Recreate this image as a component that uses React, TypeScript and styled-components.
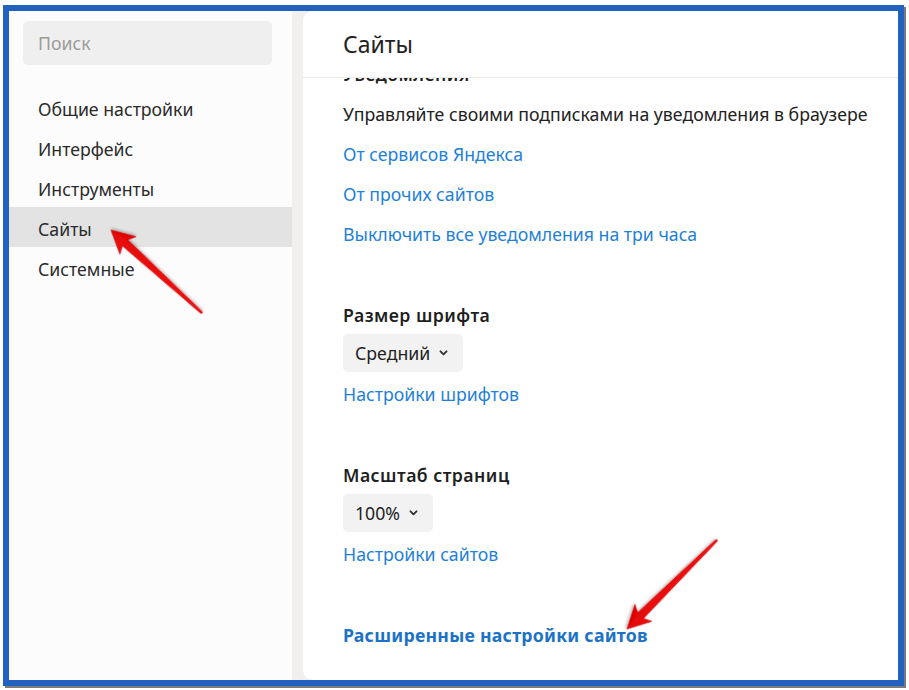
import * as React from 'react'
import styled, { createGlobalStyle } from 'styled-components'

const GlobalStyle = createGlobalStyle`
  html, body {
    margin: 0;
    padding: 0;
    background: #ffffff;
  }

  body {
    font-family: "Noto Sans", "Open Sans", "Liberation Sans", sans-serif;
    color: #222;
  }
`

const Page = styled('div')`
  position: relative;
  width: 909px;
  height: 690px;
  overflow: hidden;
`

const Frame = styled('div')`
  position: absolute;
  left: 3px;
  top: 5px;
  width: 901px;
  height: 681px;
  box-sizing: border-box;
  border: 6px solid #2162c1;
  box-shadow: 2px 2px 0 #7c7c7c;
  background: #f1f0ee;
  display: flex;
  overflow: hidden;
`

const Sidebar = styled('aside')`
  width: 283px;
  flex-shrink: 0;
  background: #fcfcfc;
  padding-top: 10px;
  display: flex;
  flex-direction: column;
`

const SearchBox = styled('div')`
  margin: 0 20px 0 14px;
  height: 44px;
  background: #efefef;
  border-radius: 5px;
  display: flex;
  align-items: center;
  padding-left: 15px;
  color: #9b9b9b;
  font-size: 17.7px;
`

const NavList = styled('nav')`
  margin-top: 22px;
  display: flex;
  flex-direction: column;
`

const NavItem = styled('div')<{ $active?: boolean }>`
  height: 40px;
  display: flex;
  align-items: center;
  padding-left: 29px;
  padding-top: 3px;
  box-sizing: border-box;
  font-size: 17.7px;
  color: #2b2b2b;
  background: ${(props) => (props.$active ? '#e3e3e3' : 'transparent')};
`

const Panel = styled('main')`
  flex: 1;
  margin-left: 11px;
  background: #ffffff;
  border-radius: 10px 0 0 10px;
  display: flex;
  flex-direction: column;
  overflow: hidden;
`

const PanelHeader = styled('header')`
  height: 66px;
  flex-shrink: 0;
  border-bottom: 1px solid #ebebeb;
  padding-left: 40px;
  display: flex;
  align-items: center;
  font-size: 23px;
  color: #222;
  position: relative;
  z-index: 1;
  background: #fff;
`

const Content = styled('div')`
  flex: 1;
  overflow: hidden;
  padding-left: 40px;
`

const Section = styled('section')<{ $pulled?: boolean }>`
  margin-top: ${(props) => (props.$pulled ? '-23px' : '0')};
  margin-bottom: 41px;
  display: flex;
  flex-direction: column;
  align-items: flex-start;
`

const Row = styled('div')`
  height: 40px;
  line-height: 41px;
  font-size: 17.7px;
  white-space: nowrap;
`

const SectionTitle = styled(Row)<{ $clipped?: boolean }>`
  font-weight: 600;
  letter-spacing: 0.45px;
  color: #1f1f1f;
  height: 39px;
  line-height: ${(props) => (props.$clipped ? '38px' : '41px')};
  overflow: hidden;
`

const LinkRow = styled(Row)<{ $strong?: boolean; $gap?: boolean }>`
  color: ${(props) => (props.$strong ? '#1b72c6' : '#1f80d8')};
  font-weight: ${(props) => (props.$strong ? 700 : 400)};
  letter-spacing: ${(props) => (props.$strong ? '0.25px' : '0')};
  margin-top: ${(props) => (props.$gap ? '2px' : '0')};
  cursor: pointer;
`

const Select = styled('div')<{ $width: number }>`
  width: ${(props) => props.$width}px;
  height: 38px;
  box-sizing: border-box;
  padding-left: 12px;
  background: #f2f2f2;
  border-radius: 5px;
  display: flex;
  align-items: center;
  gap: 9px;
  font-size: 17.7px;
  color: #222;
`

const Overlay = styled('svg')`
  position: absolute;
  left: 0;
  top: 0;
  pointer-events: none;
`

const Chevron = () => (
  <svg width="9" height="6" viewBox="0 0 9 6">
    <path d="M1.5 1.3 L4.5 4.3 L7.5 1.3" fill="none" stroke="#333" strokeWidth="1.9" strokeLinecap="round" strokeLinejoin="round" />
  </svg>
)

interface ArrowProps {
  from: [number, number]
  to: [number, number]
}

const Arrow = ({ from, to }: ArrowProps) => {
  const dx = to[0] - from[0]
  const dy = to[1] - from[1]
  const len = Math.sqrt(dx * dx + dy * dy)
  const angle = (Math.atan2(dy, dx) * 180) / Math.PI
  const points = [
    [0, -0.9],
    [len - 19, -4],
    [len - 23, -12],
    [len, 0],
    [len - 23, 12],
    [len - 19, 4],
    [0, 0.9],
  ]
    .map((p) => p.join(','))
    .join(' ')

  return (
    <g transform={`translate(${from[0]} ${from[1]}) rotate(${angle})`}>
      <polygon points={points} fill="url(#arrowRed)" stroke="#c90000" strokeWidth="0.6" strokeLinejoin="round" filter="url(#arrowShadow)" />
    </g>
  )
}

const navItems = ['Общие настройки', 'Интерфейс', 'Инструменты', 'Сайты', 'Системные']

export default function App() {
  return (
    <Page>
      <GlobalStyle />
      <Frame>
        <Sidebar>
          <SearchBox>Поиск</SearchBox>
          <NavList>
            {navItems.map((item) => (
              <NavItem key={item} $active={item === 'Сайты'}>
                {item}
              </NavItem>
            ))}
          </NavList>
        </Sidebar>
        <Panel>
          <PanelHeader>Сайты</PanelHeader>
          <Content>
            <Section $pulled>
              <SectionTitle $clipped>Уведомления</SectionTitle>
              <Row>Управляйте своими подписками на уведомления в браузере</Row>
              <LinkRow>От сервисов Яндекса</LinkRow>
              <LinkRow>От прочих сайтов</LinkRow>
              <LinkRow>Выключить все уведомления на три часа</LinkRow>
            </Section>
            <Section>
              <SectionTitle>Размер шрифта</SectionTitle>
              <Select $width={120}>
                Средний <Chevron />
              </Select>
              <LinkRow $gap>Настройки шрифтов</LinkRow>
            </Section>
            <Section>
              <SectionTitle>Масштаб страниц</SectionTitle>
              <Select $width={90}>
                100% <Chevron />
              </Select>
              <LinkRow $gap>Настройки сайтов</LinkRow>
            </Section>
            <Section>
              <LinkRow $strong>Расширенные настройки сайтов</LinkRow>
            </Section>
          </Content>
        </Panel>
      </Frame>
      <Overlay width="909" height="690" viewBox="0 0 909 690">
        <defs>
          <linearGradient id="arrowRed" x1="0" y1="0" x2="1" y2="1">
            <stop offset="0" stopColor="#ff1a1a" />
            <stop offset="1" stopColor="#d90000" />
          </linearGradient>
          <filter id="arrowShadow" x="-20%" y="-20%" width="140%" height="140%">
            <feDropShadow dx="1" dy="1.5" stdDeviation="1" floodColor="#000" floodOpacity="0.25" />
          </filter>
        </defs>
        <Arrow from={[202, 313]} to={[111, 230]} />
        <Arrow from={[717, 540]} to={[627, 629]} />
      </Overlay>
    </Page>
  )
}
